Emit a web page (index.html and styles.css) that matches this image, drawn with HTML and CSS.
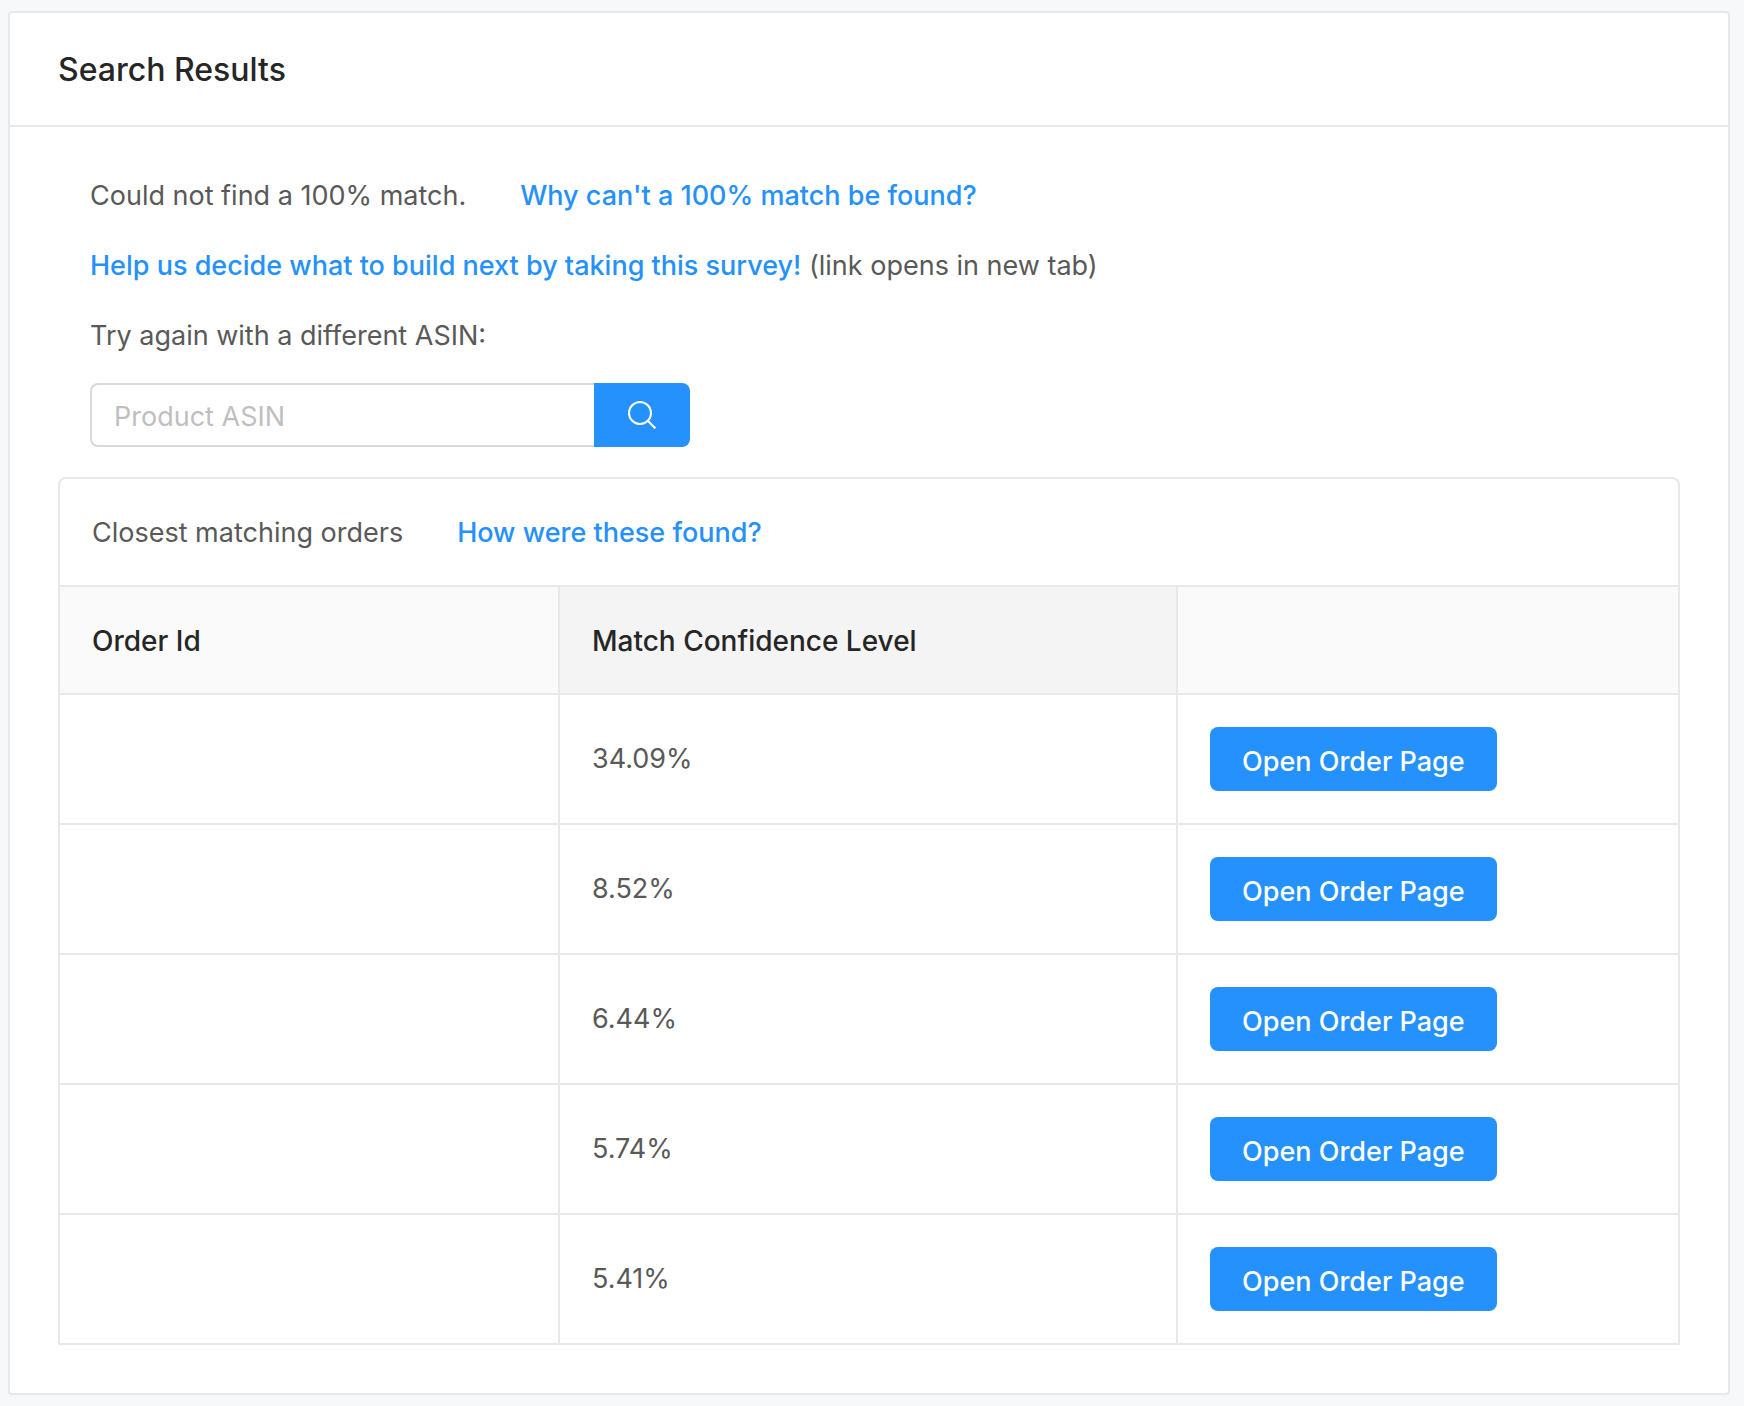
FILE: index.html
```
<!DOCTYPE html>
<html lang="en">
<head>
    <meta charset="UTF-8">
    <meta name="viewport" content="width=device-width, initial-scale=1.0">
    <title>Search Results</title>
    <link rel="stylesheet" href="styles.css">
</head>
<body>
    <div class="card">
        <header class="card-head">
            <h1>Search Results</h1>
        </header>

        <main class="card-body">
            <section class="intro">
                <p class="line">
                    <span>Could not find a 100% match.</span>
                    <a href="#why">Why can't a 100% match be found?</a>
                </p>
                <p><a href="#survey" target="_blank">Help us decide what to build next by taking this survey!</a> (link opens in new tab)</p>
                <p><label for="asin">Try again with a different ASIN:</label></p>
                <form class="search">
                    <input type="text" id="asin" placeholder="Product ASIN">
                    <button type="submit" class="btn search-btn" aria-label="Search">
                        <svg viewBox="0 0 28 28" width="28" height="28" fill="none" stroke="currentColor" stroke-width="2">
                            <circle cx="12" cy="12" r="11"/>
                            <path d="M19.8 19.8L27.4 27.4"/>
                        </svg>
                    </button>
                </form>
            </section>

            <section class="orders">
                <div class="orders-title line">
                    <span>Closest matching orders</span>
                    <a href="#how">How were these found?</a>
                </div>
                <table>
                    <thead>
                        <tr>
                            <th class="col-id">Order Id</th>
                            <th class="col-match sorted">Match Confidence Level</th>
                            <th></th>
                        </tr>
                    </thead>
                    <tbody>
                        <tr>
                            <td></td>
                            <td>34.09%</td>
                            <td><button type="button" class="btn">Open Order Page</button></td>
                        </tr>
                        <tr>
                            <td></td>
                            <td>8.52%</td>
                            <td><button type="button" class="btn">Open Order Page</button></td>
                        </tr>
                        <tr>
                            <td></td>
                            <td>6.44%</td>
                            <td><button type="button" class="btn">Open Order Page</button></td>
                        </tr>
                        <tr>
                            <td></td>
                            <td>5.74%</td>
                            <td><button type="button" class="btn">Open Order Page</button></td>
                        </tr>
                        <tr>
                            <td></td>
                            <td>5.41%</td>
                            <td><button type="button" class="btn">Open Order Page</button></td>
                        </tr>
                    </tbody>
                </table>
            </section>
        </main>
    </div>
</body>
</html>
```
FILE: styles.css
```
* {
    box-sizing: border-box;
}

body {
    margin: 0;
    padding: 11px 14px 11px 8px;
    background-color: #f7f8fa;
    color: #595959;
    font-family: Inter, "Liberation Sans", sans-serif;
    font-size: 27px;
    line-height: 42px;
}

a {
    color: #2491fc;
    font-weight: 500;
    text-decoration: none;
}

a:hover {
    color: #40a9ff;
}

.card {
    background: white;
    border: 2px solid #e8e8e8;
    border-radius: 4px;
}

.card-head {
    padding: 33px 48px 31px;
    border-bottom: 2px solid #e8e8e8;
}

h1 {
    margin: 0;
    color: #262626;
    font-size: 32px;
    font-weight: 500;
    line-height: 48px;
}

.card-body {
    padding: 48px;
}

.intro {
    padding: 0 32px;
}

.intro p {
    margin: 0 0 28px;
}

.line {
    display: flex;
    gap: 54px;
}

.search {
    display: flex;
    width: 600px;
    max-width: 100%;
    margin: -2px 0 30px;
}

.search input {
    flex: 1;
    min-width: 0;
    height: 64px;
    padding: 2px 22px 0;
    border: 2px solid #d9d9d9;
    border-right: none;
    border-radius: 8px 0 0 8px;
    color: #595959;
    font-family: inherit;
    font-size: 27px;
}

.search input::placeholder {
    color: #bfbfbf;
}

.btn {
    height: 64px;
    padding: 4px 32px 0;
    border: none;
    border-radius: 8px;
    background-color: #2491fc;
    color: white;
    font-family: inherit;
    font-size: 27px;
    font-weight: 500;
    cursor: pointer;
}

.btn:hover {
    background-color: #40a9ff;
}

.search-btn {
    display: flex;
    align-items: center;
    justify-content: center;
    width: 96px;
    padding: 0;
    border-radius: 0 8px 8px 0;
}

.orders {
    border: 2px solid #e8e8e8;
    border-bottom: none;
    border-radius: 8px 8px 0 0;
}

.orders-title {
    padding: 33px 32px 31px;
}

table {
    width: 100%;
    border-collapse: separate;
    border-spacing: 0;
    table-layout: fixed;
}

th, td {
    padding: 33px 32px 31px;
    border-right: 2px solid #e8e8e8;
    border-bottom: 2px solid #e8e8e8;
    text-align: left;
}

td {
    padding: 32px;
}

th:last-child, td:last-child {
    border-right: none;
}

th {
    border-top: 2px solid #e8e8e8;
    background-color: #fafafa;
    color: #262626;
    font-size: 28px;
    font-weight: 500;
}

td .btn {
    display: block;
}

.col-id {
    width: 30.9%;
}

.col-match {
    width: 38.2%;
}

.sorted {
    background-color: #f4f4f4;
}
```
